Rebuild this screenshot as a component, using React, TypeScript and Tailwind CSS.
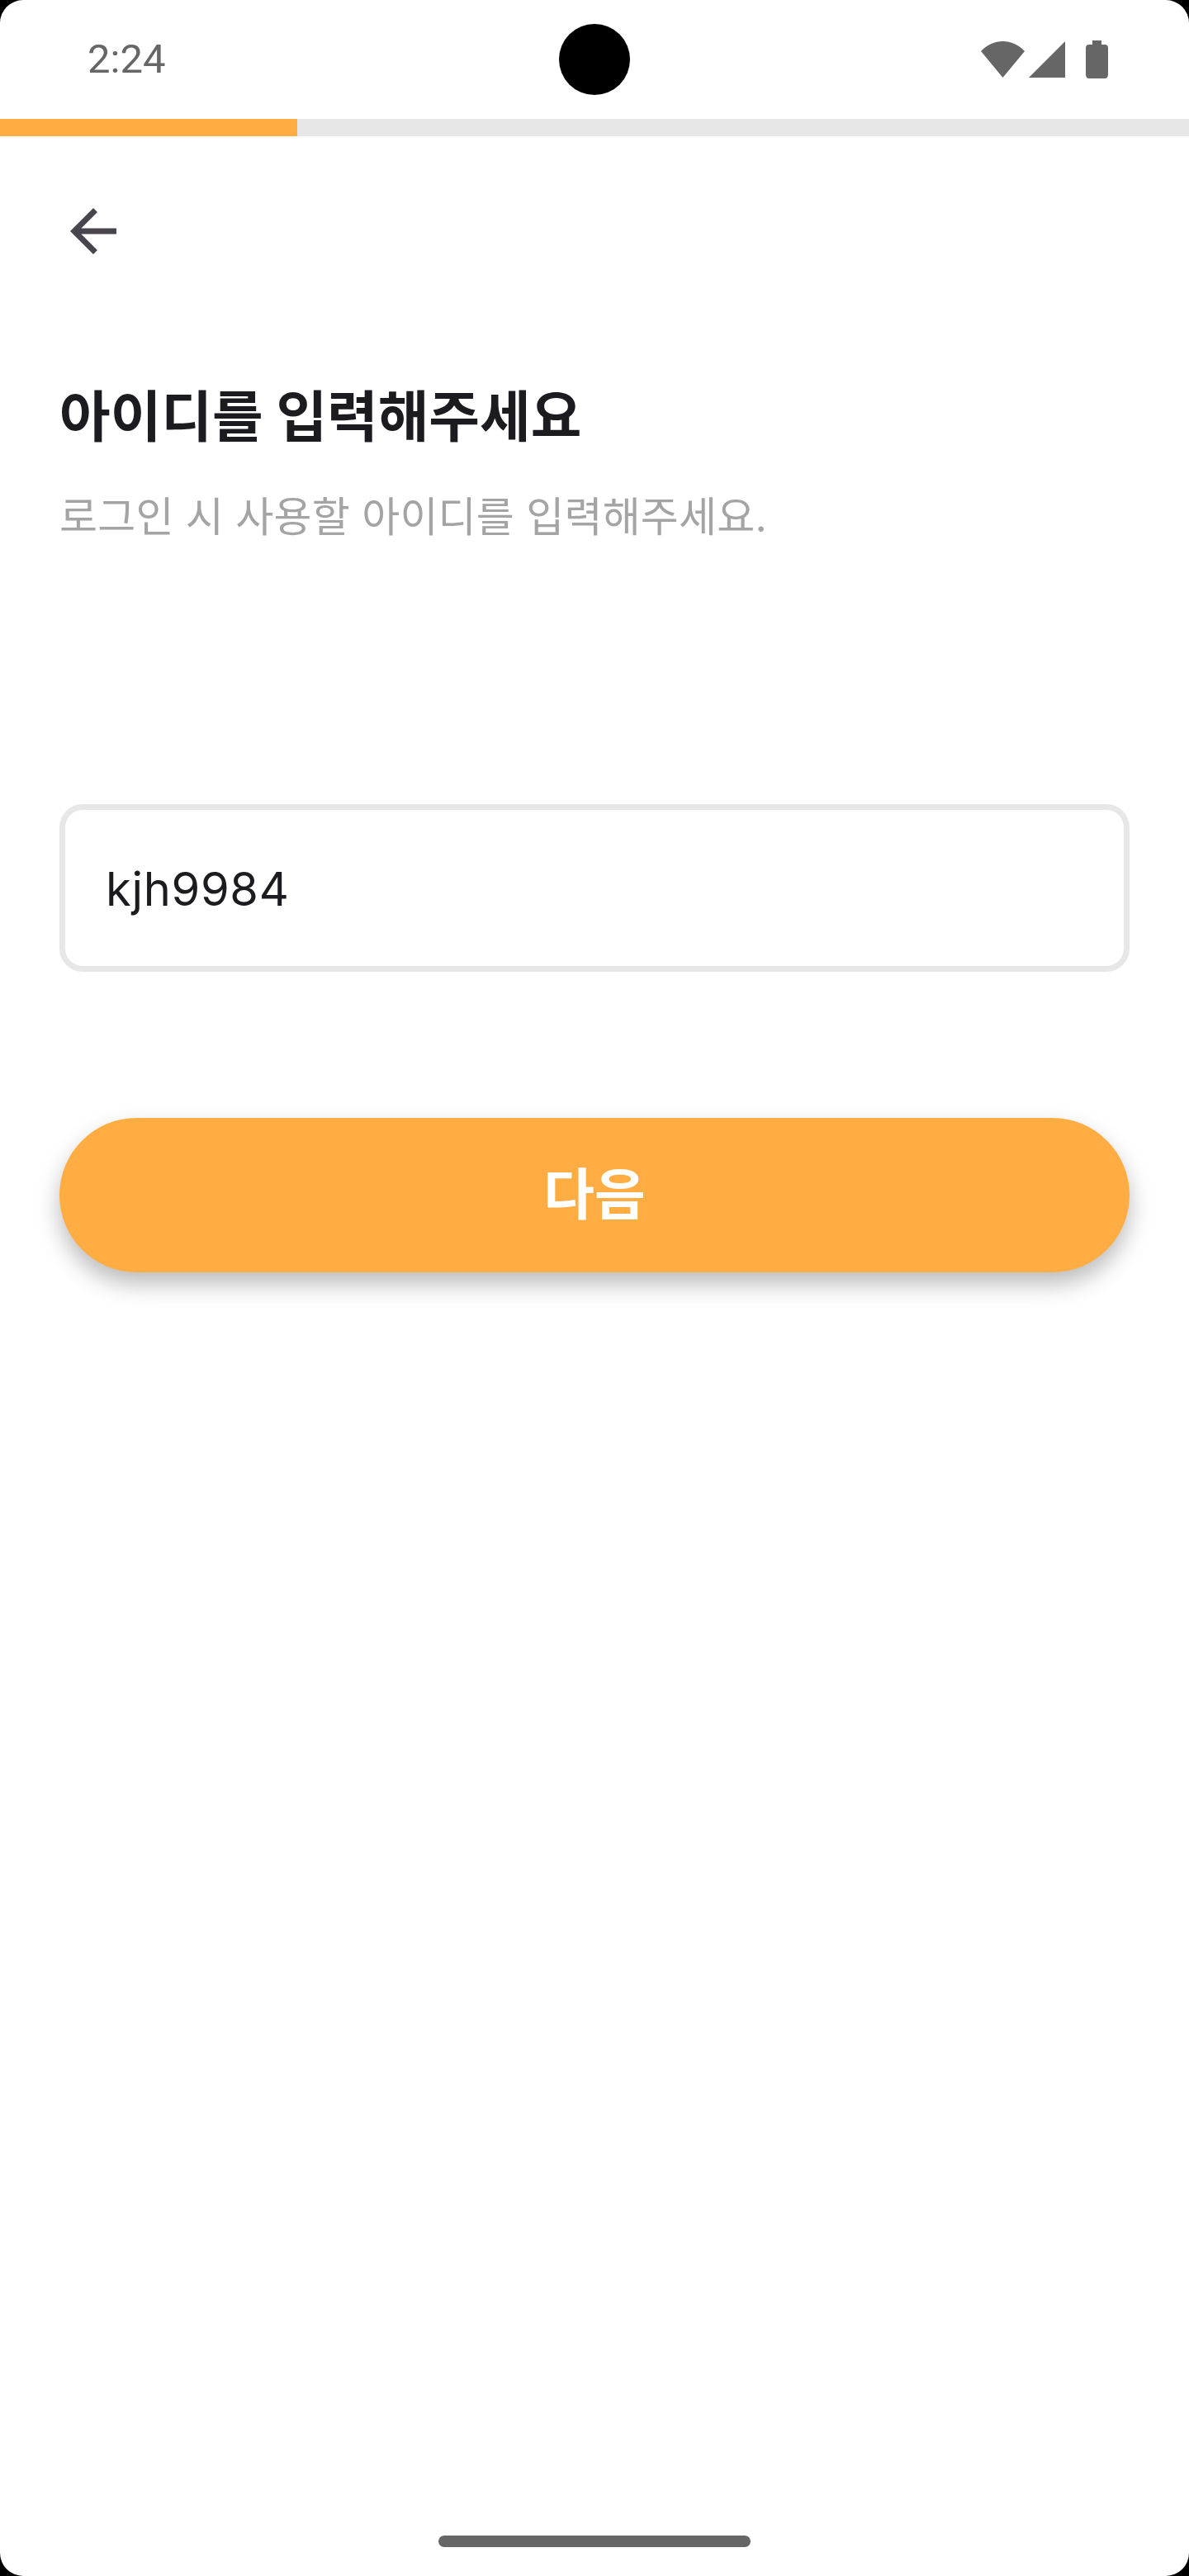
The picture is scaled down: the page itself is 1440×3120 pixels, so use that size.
import React from 'react';

const StatusBar = () => (
  <div className="relative h-[144px] flex items-start justify-between">
    <span className="ml-[106px] mt-[42px] text-[49px] leading-[60px] text-[#666666] font-['Roboto',sans-serif]">2:24</span>
    {/* camera cutout */}
    <div className="absolute left-[677px] top-[29px] w-[86px] h-[86px] rounded-full bg-black" />
    <svg className="mt-[49px] mr-[98px]" width="154" height="46" viewBox="0 0 154 46" fill="#666666">
      <path d="M0 13 C15 -3 38 -3 53 13 L26.5 45 Z" />
      <path d="M58 45 L102 1 V45 Z" />
      <path d="M135 0 H146 V5 H150 Q154 5 154 9 V41 Q154 46 150 46 H131 Q127 46 127 41 V9 Q127 5 131 5 H135 Z" />
    </svg>
  </div>
);

export default function App() {
  return (
    <div className="w-[1440px] h-[3120px] bg-black overflow-hidden">
      <div className="relative w-full h-full bg-white rounded-[28px] flex flex-col">
        <StatusBar />
        <div className="h-[21px] bg-[#e7e7e7]">
          <div className="w-[360px] h-full bg-[#ffac42]" />
        </div>

        <div className="pl-[85px] pt-[87px]">
          <svg width="56" height="56" viewBox="4 4 16 16" fill="#49454f">
            <path d="M20 11H7.83l5.59-5.59L12 4l-8 8 8 8 1.41-1.41L7.83 13H20v-2z" />
          </svg>
        </div>

        <div className="px-[72px] flex flex-col">
          <h1 className="mt-[152px] text-[67px] leading-[90px] font-bold text-[#1c1b1f] font-['Inter','Noto_Sans_CJK_KR',sans-serif]">
            아이디를 입력해주세요
          </h1>
          <p className="mt-[41px] text-[50px] leading-[70px] tracking-[0.2px] text-[#a4a4a4] font-['Inter','Noto_Sans_CJK_KR',sans-serif]">
            로그인 시 사용할 아이디를 입력해주세요.
          </p>

          <div className="mt-[313px] h-[203px] border-[7px] border-[#e7e7e7] rounded-[28px] flex items-center pl-[49px] pt-[2px]">
            <span className="text-[56px] tracking-[0.7px] text-[#1c1b1f] font-['Inter',sans-serif]">kjh9984</span>
          </div>

          <button className="mt-[177px] h-[187px] rounded-[94px] bg-[#ffac42] text-white text-[67px] font-bold shadow-[0_14px_28px_rgba(0,0,0,0.27)] font-['Inter','Noto_Sans_CJK_KR',sans-serif]">
            다음
          </button>
        </div>

        {/* gesture bar */}
        <div className="absolute bottom-[35px] left-[531px] w-[378px] h-[14px] rounded-full bg-[#666666]" />
      </div>
    </div>
  );
}
